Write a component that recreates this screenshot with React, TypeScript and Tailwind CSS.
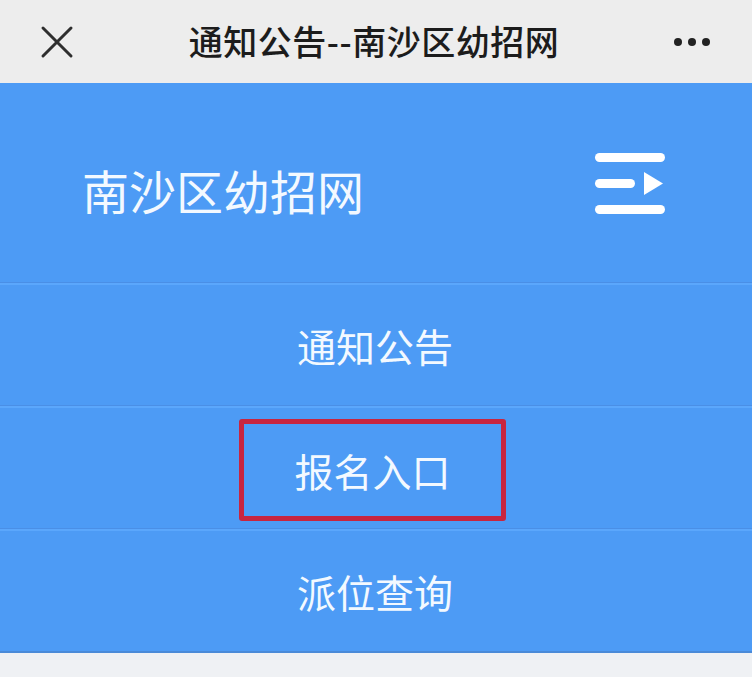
const menuItems = [
  { label: "通知公告", active: false },
  { label: "报名入口", active: true },
  { label: "派位查询", active: false },
];

const cjk = "font-['Noto_Sans_CJK_SC','Noto_Sans',sans-serif]";

export default function App() {
  return (
    <div className={`w-[752px] h-[677px] bg-[#eff1f4] ${cjk} overflow-hidden`}>
      {/* WeChat top bar */}
      <header className="h-[83px] bg-[#ededed] flex items-center px-[40px]">
        <svg width="34" height="34" viewBox="0 0 34 34" className="shrink-0">
          <path d="M3 3 L31 31 M31 3 L3 31" stroke="#2e2e2e" strokeWidth="3" strokeLinecap="round" />
        </svg>
        <h1 className="flex-1 text-center text-[34px] font-medium text-[#1c1c1c] tracking-[0.5px] -mt-[2px]">
          通知公告--南沙区幼招网
        </h1>
        <div className="flex items-center gap-[6px] pr-[2px]">
          <span className="w-[8px] h-[8px] rounded-full bg-[#222]" />
          <span className="w-[8px] h-[8px] rounded-full bg-[#222]" />
          <span className="w-[8px] h-[8px] rounded-full bg-[#222]" />
        </div>
      </header>

      {/* Blue site nav */}
      <div className="bg-[#4d9bf5] border-b-2 border-[#4a8ad8]">
        <div className="h-[199px] flex items-center justify-between pl-[82px] pr-[86px]">
          <span className="text-[47px] text-[#f3f9ff] mt-[16px]">南沙区幼招网</span>
          <svg width="72" height="64" viewBox="0 0 72 64">
            <rect x="1" y="2" width="70" height="9" rx="4.5" fill="#fff" />
            <rect x="1" y="28" width="40" height="9" rx="4.5" fill="#fff" />
            <path d="M50 21 L69 32.5 L50 44 Z" fill="#fff" />
            <rect x="1" y="54" width="70" height="9" rx="4.5" fill="#fff" />
          </svg>
        </div>

        {menuItems.map((item) => (
          <div key={item.label} className="border-t border-[#4a8fe6]">
            <div className="h-[122px] border-t-2 border-[#5ba7fc] flex items-center justify-center">
              <span
                className={
                  item.active
                    ? "w-[267px] h-[102px] mt-[4px] mr-[7px] border-[5px] border-[#c8253f] rounded-[3px] flex items-center justify-center text-[39px] text-[#f3f9ff]"
                    : "text-[39px] text-[#f3f9ff] mr-[2px]"
                }
              >
                {item.label}
              </span>
            </div>
          </div>
        ))}
      </div>
    </div>
  );
}
